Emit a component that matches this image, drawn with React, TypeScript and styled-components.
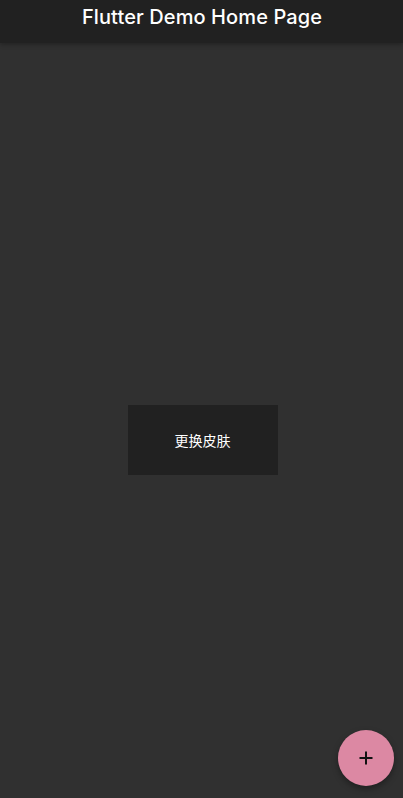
import styled, { createGlobalStyle } from "styled-components";

const GlobalStyle = createGlobalStyle`
  html, body {
    margin: 0;
    padding: 0;
    height: 100%;
    background: #303030;
  }
  #root {
    height: 100%;
  }
`;

const Screen = styled.div`
  position: relative;
  display: flex;
  flex-direction: column;
  width: 100%;
  height: 100vh;
  background: #303030;
  font-family: "Noto Sans", "Noto Sans CJK SC", sans-serif;
  overflow: hidden;
`;

const AppBar = styled.header`
  height: 43px;
  flex-shrink: 0;
  display: flex;
  align-items: center;
  justify-content: center;
  background: #212121;
  box-shadow: 0 2px 4px rgba(0, 0, 0, 0.25);
  z-index: 1;
`;

const Title = styled.h1`
  margin: 0 0 10px 1px;
  font-family: Inter, "Noto Sans", sans-serif;
  font-size: 20px;
  font-weight: 500;
  color: #ffffff;
  letter-spacing: 0.1px;
`;

const Body = styled.main`
  flex: 1;
  display: flex;
  align-items: center;
  justify-content: center;
  padding: 39px 0 0 2px;
`;

const SkinButton = styled.button`
  width: 150px;
  height: 70px;
  border: none;
  border-radius: 0;
  background: #212121;
  color: #ffffff;
  font-family: "Noto Sans CJK SC", "Noto Sans", sans-serif;
  font-size: 14px;
  cursor: pointer;
`;

const Fab = styled.button`
  position: absolute;
  right: 9px;
  bottom: 12px;
  width: 56px;
  height: 56px;
  border: none;
  border-radius: 50%;
  background: #dc88a3;
  display: flex;
  align-items: center;
  justify-content: center;
  box-shadow: 0 3px 6px rgba(0, 0, 0, 0.35);
  cursor: pointer;
`;

function App() {
  return (
    <>
      <GlobalStyle />
      <Screen>
        <AppBar>
          <Title>Flutter Demo Home Page</Title>
        </AppBar>
        <Body>
          <SkinButton>更换皮肤</SkinButton>
        </Body>
        <Fab aria-label="add">
          <svg width="16" height="16" viewBox="0 0 16 16">
            <path d="M8 1.5v13M1.5 8h13" stroke="#111" strokeWidth="2" />
          </svg>
        </Fab>
      </Screen>
    </>
  );
}

export default App;
